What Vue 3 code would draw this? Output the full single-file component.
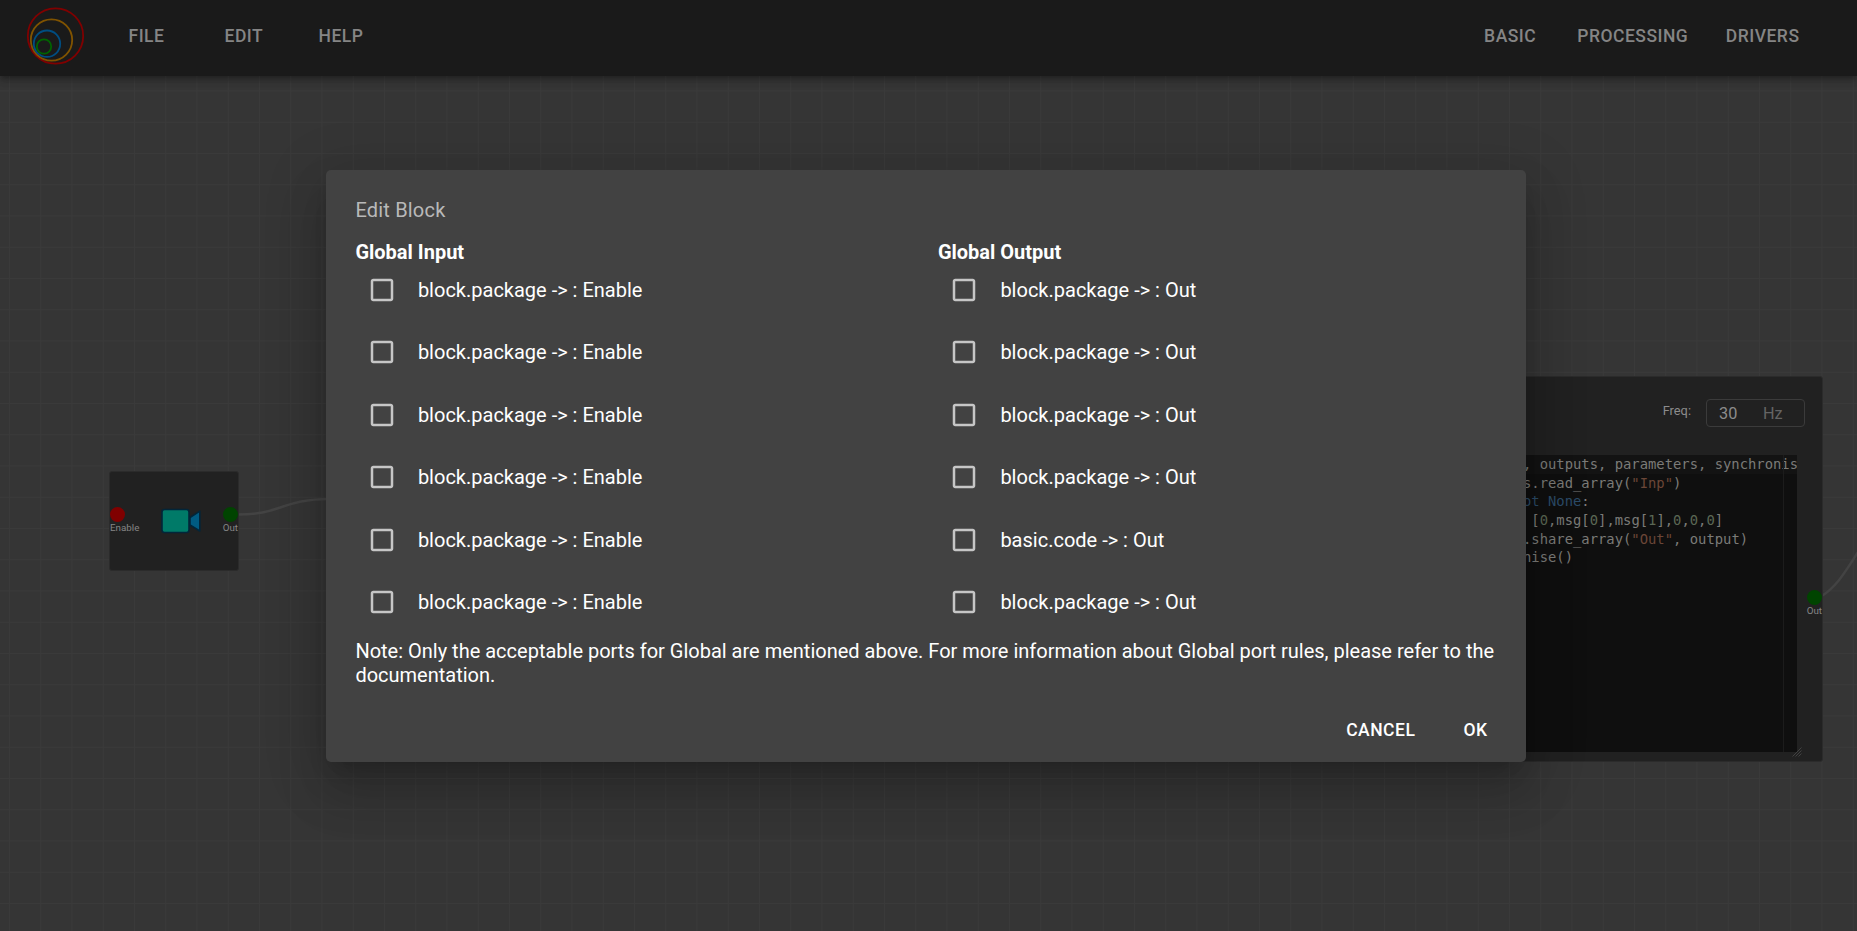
<script setup>
const leftMenu = ['FILE', 'EDIT', 'HELP']
const rightMenu = ['BASIC', 'PROCESSING', 'DRIVERS']
const pkg = 'block.package -> : '
const columns = [
  { title: 'Global Input', items: Array(6).fill(pkg + 'Enable') },
  {
    title: 'Global Output',
    items: [pkg + 'Out', pkg + 'Out', pkg + 'Out', pkg + 'Out', 'basic.code -> : Out', pkg + 'Out'],
  },
]
const code = [
  [['', ', outputs, parameters, synchronis']],
  [['', 's.read_array('], ['str', '"Inp"'], ['', ')']],
  [['kw', 'ot None'], ['', ':']],
  [['', ' ['], ['num', '0'], ['', ',msg['], ['num', '0'], ['', '],msg['], ['num', '1'], ['', '],'], ['num', '0'], ['', ','], ['num', '0'], ['', ','], ['num', '0'], ['', ']']],
  [['', '.share_array('], ['str', '"Out"'], ['', ', output)']],
  [['', 'nise()']],
]
</script>

<template>
  <div class="app">
    <header class="bar">
      <svg class="logo" width="60" height="60" viewBox="0 0 60 60" fill="none" stroke-width="1.8">
        <circle cx="30.5" cy="30" r="27.7" stroke="#800000" />
        <circle cx="26.5" cy="34" r="20.7" stroke="#805300" />
        <circle cx="22" cy="37.7" r="13.2" stroke="#004d80" />
        <circle cx="19" cy="40.5" r="7.2" stroke="#006400" />
      </svg>
      <nav class="left">
        <span v-for="m in leftMenu" :key="m" :class="['item', m.toLowerCase()]">{{ m }}</span>
      </nav>
      <nav class="right">
        <span v-for="m in rightMenu" :key="m" :class="['item', m.toLowerCase()]">{{ m }}</span>
      </nav>
    </header>

    <svg class="links" width="1857" height="931" fill="none" stroke="#434343" stroke-width="2.5">
      <path d="M238 514.5 C282 514.5 282 499 330 499" />
      <path d="M1821 596.5 C1840 585 1850 563 1868 537" />
    </svg>

    <section class="node camera">
      <div class="port">
        <i class="dot red"></i>
        <span>Enable</span>
      </div>
      <svg class="cam" width="40" height="26" viewBox="0 0 40 26" stroke="#02263a" stroke-width="1.6" stroke-linejoin="round">
        <rect x="1" y="1.5" width="27" height="23" rx="2.5" fill="#007a68" />
        <path d="M29 9.5L38.8 3.2V23L29 17Z" fill="#005b82" />
      </svg>
      <div class="port end">
        <i class="dot green"></i>
        <span>Out</span>
      </div>
    </section>

    <section class="node code-node">
      <div class="freq">
        <span class="freq-label">Freq:</span>
        <div class="freq-box"><b>30</b><em>Hz</em></div>
      </div>
      <div class="editor">
        <div v-for="(line, i) in code" :key="i" :class="['line', { active: i === 0 }]"><span v-for="(t, j) in line" :key="j" :class="t[0]">{{ t[1] }}</span></div>
        <i class="ruler"></i>
      </div>
      <svg class="grip" width="10" height="10" viewBox="0 0 10 10" stroke="#4a4a4a" stroke-width="0.8">
        <path d="M0.5 9.5L9.5 0.5M3.5 9.5L9.5 3.5M6.5 9.5L9.5 6.5" />
      </svg>
      <div class="port end code-out">
        <i class="dot green"></i>
        <span>Out</span>
      </div>
    </section>

    <div class="dialog">
      <p class="title">Edit Block</p>
      <div class="columns">
        <div v-for="c in columns" :key="c.title" class="column">
          <h3>{{ c.title }}</h3>
          <label v-for="(t, i) in c.items" :key="i" class="check">
            <svg width="30" height="30" viewBox="0 0 24 24" fill="#c6c6c6">
              <path d="M19 5v14H5V5h14m0-2H5c-1.1 0-2 .9-2 2v14c0 1.1.9 2 2 2h14c1.1 0 2-.9 2-2V5c0-1.1-.9-2-2-2z" />
            </svg>
            <span>{{ t }}</span>
          </label>
        </div>
      </div>
      <p class="note">Note: Only the acceptable ports for Global are mentioned above. For more information about Global port rules, please refer to the documentation.</p>
      <div class="actions">
        <button>CANCEL</button>
        <button>OK</button>
      </div>
    </div>
  </div>
</template>

<style>
body {
  margin: 0;
  background: #353535;
  overflow: hidden;
}
</style>

<style scoped>
.app {
  position: relative;
  width: 1857px;
  height: 931px;
  overflow: hidden;
  font-family: Roboto, sans-serif;
  background-color: #353535;
  background-image: linear-gradient(to right, #3a3a3a 1.25px, transparent 1.25px),
    linear-gradient(to bottom, #3a3a3a 1.25px, transparent 1.25px);
  background-size: 31.25px 31.25px;
  background-position: 9px 28px;
}
.bar {
  position: relative;
  box-sizing: border-box;
  display: flex;
  align-items: center;
  height: 76px;
  padding: 0 57.5px 4px 25px;
  background: #1a1a1a;
  box-shadow: 0 2.5px 5px -1px rgba(0, 0, 0, 0.2), 0 5px 6px rgba(0, 0, 0, 0.14), 0 1px 12px rgba(0, 0, 0, 0.12);
}
.left,
.right {
  display: flex;
}
.left {
  margin-left: 43.5px;
}
.right {
  margin-left: auto;
  gap: 41px;
}
.right .drivers {
  margin-left: -3.5px;
}
.item {
  font-size: 17.5px;
  font-weight: 500;
  letter-spacing: 0.5px;
  color: #858585;
  line-height: 30px;
}
.left .item {
  width: 96px;
}
.left .edit {
  width: 94px;
}
.links {
  position: absolute;
  left: 0;
  top: 0;
}
.node {
  position: absolute;
  box-sizing: border-box;
  background: #212121;
  border: 1px solid #2b2b2b;
  border-radius: 3px;
}
.camera {
  left: 109px;
  top: 471px;
  width: 130px;
  height: 100px;
  display: flex;
  justify-content: space-between;
  align-items: flex-start;
}
.port {
  display: flex;
  flex-direction: column;
  align-items: flex-start;
  margin-top: 35px;
  font-size: 9.8px;
  line-height: 11px;
  color: #858585;
}
.port.end {
  align-items: flex-end;
}
.dot {
  width: 15px;
  height: 15px;
  border-radius: 50%;
}
.red {
  background: #800000;
}
.green {
  background: #004400;
}
.cam {
  margin: 36px 7px 0 6px;
}
.code-node {
  left: 1100px;
  top: 376px;
  width: 723px;
  height: 386px;
}
.freq {
  display: flex;
  justify-content: flex-end;
  padding: 22px 17px 0 0;
}
.freq-label {
  margin: 4px 15px 0 0;
  font-size: 12.8px;
  line-height: 16px;
  color: #8c8c8c;
}
.freq-box {
  box-sizing: border-box;
  width: 99px;
  height: 28px;
  display: flex;
  align-items: center;
  border: 1px solid #3b3b3b;
  border-radius: 4px;
  padding-left: 12px;
  font-size: 16.25px;
}
.freq-box b {
  width: 44px;
  font-weight: 400;
  color: #8c8c8c;
}
.freq-box em {
  font-style: normal;
  color: #646464;
}
.editor {
  position: relative;
  width: 696px;
  height: 297px;
  margin-top: 28px;
  overflow: hidden;
  background: #0f0f0f;
  font-family: "DejaVu Sans Mono", monospace;
  font-size: 13.85px;
  color: #7b7b78;
}
.line {
  box-sizing: border-box;
  height: 18.7px;
  line-height: 18.7px;
  padding-left: 422px;
  white-space: pre;
}
.line.active {
  background: #131313;
}
.str {
  color: #6b4637;
}
.kw {
  color: #2b4b68;
}
.num {
  color: #5b6754;
}
.ruler {
  position: absolute;
  top: 0;
  left: 682px;
  width: 1px;
  height: 100%;
  background: #1c1c1c;
}
.grip {
  position: absolute;
  right: 20px;
  bottom: 4px;
}
.code-out {
  position: absolute;
  right: 0;
  top: 178px;
}
.dialog {
  position: absolute;
  left: 326px;
  top: 170px;
  box-sizing: border-box;
  width: 1200px;
  height: 592px;
  padding: 25px 30px 0 29.4px;
  background: #424242;
  border-radius: 5px;
  color: #fff;
  font-size: 20px;
  box-shadow: 0 13.75px 18.75px -8.75px rgba(0, 0, 0, 0.2), 0 30px 47.5px 3.75px rgba(0, 0, 0, 0.14),
    0 11.25px 57.5px 10px rgba(0, 0, 0, 0.12);
}
.title {
  margin: 0;
  height: 46px;
  line-height: 30px;
  letter-spacing: 0.19px;
  color: #b9b9b9;
}
.columns {
  display: flex;
}
.column {
  flex: none;
  width: 582.5px;
}
.column:last-child {
  width: 558px;
}
h3 {
  margin: 0;
  height: 23px;
  font-size: 20px;
  font-weight: 700;
  line-height: 23px;
}
.check {
  display: flex;
  align-items: flex-start;
  box-sizing: border-box;
  height: 62.4px;
  padding: 11px 0 0 11.25px;
}
.check span {
  margin-left: 21.25px;
  line-height: 30px;
}
.check svg {
  flex: none;
}
.note {
  margin: 1px 0 0;
  line-height: 24px;
}
.actions {
  display: flex;
  justify-content: flex-end;
  gap: 48px;
  margin: 28px 8.5px 0 0;
}
button {
  padding: 0;
  border: 0;
  background: none;
  color: #fff;
  font: 500 17.5px/30px Roboto, sans-serif;
  letter-spacing: 0.5px;
}
</style>
